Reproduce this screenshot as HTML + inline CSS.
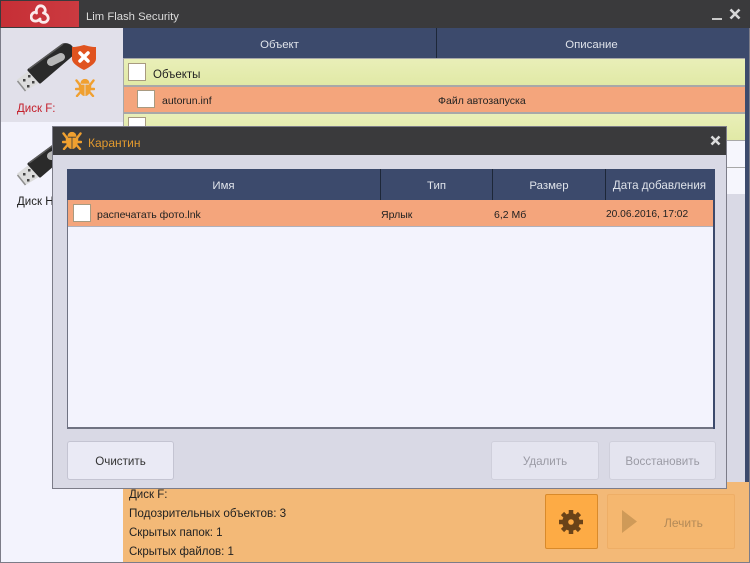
<!DOCTYPE html>
<html><head><meta charset="utf-8"><style>
html,body{margin:0;padding:0}
body{width:750px;height:563px;position:relative;overflow:hidden;background:#7c7c88;font-family:"Liberation Sans",sans-serif;font-size:10.5px;color:#222}
.a{position:absolute}
.t{position:absolute;white-space:nowrap;line-height:14px}
.cb{position:absolute;width:16px;height:16px;background:#fff;border:1px solid #a89a80}
.hd{color:#dfe3ea;font-size:11.4px;text-align:center}
.btn{position:absolute;box-sizing:border-box;border:1px solid #cfcfdb;border-radius:3px;background:#e4e4ef;text-align:center;color:#9a9aa4;font-size:11.6px}
.b{font-size:11.5px}
</style></head><body>
<svg width="0" height="0" style="position:absolute"><defs>
<symbol id="bug" viewBox="0 0 20 20"><g fill="none" stroke="#f0a030" stroke-width="2.400" stroke-linecap="round"><path d="M5 8L1.500 3.500M4.500 12H1M5.500 15L2 19M15 8l3.500-4.500M15.500 12H19M14.500 15l3.500 4"/></g><path fill="#f0a030" d="M5.500 6.800C5.500 .2 14.500 .2 14.500 6.800zM3.800 7.600h5.800V19C6 19 3.400 13.500 3.800 7.600zM10.400 7.600h5.800c.4 5.900-2.200 11.400-5.800 11.400z"/></symbol>
<symbol id="usb" viewBox="0 0 64 50"><path fill="#dcdcdc" stroke="#dcdcdc" stroke-linejoin="round" d="M2.500 38l10.500-8 10 11-12.500 7.500z"/><path fill="none" stroke="#8f8f8f" stroke-width="1.500" d="M2.500 39L10.500 49"/><rect x="8" y="37" width="2.500" height="2.500" fill="#444"/><rect x="13" y="33" width="2.500" height="2.500" fill="#444"/><rect x="12" y="43" width="2.500" height="2.500" fill="#444"/><rect x="17" y="39" width="2.500" height="2.500" fill="#444"/><path fill="#2a2a2a" stroke="#2a2a2a" stroke-width="3" stroke-linejoin="round" d="M14 28L48 3c3-1 5 0 7 1l5 6-35 30z"/><path fill="none" stroke="#5a5a5a" stroke-width="1.500" d="M14 27L48 2"/><path stroke="#b8b8b8" stroke-width="8" stroke-linecap="round" d="M36 20L46 15"/></symbol>
</defs></svg>

<!-- main window -->
<div class="a" style="left:0;top:0;width:750px;height:28px;background:#3a3a3c"></div>
<div class="a" style="left:1px;top:1px;width:78px;height:26px;background:linear-gradient(90deg,#c62f36,#cb3a40)"></div>
<svg class="a" style="left:30px;top:4px" width="20" height="20" viewBox="0 0 20 20"><g fill="none" stroke="#fbeaea" stroke-width="2.800" stroke-linecap="round"><path id="lg" d="M6.500 9C5.500 4.500 8 1.800 10.500 1.800 14 1.800 16.500 5.500 14.500 9"/><path d="M6.500 9C5.500 4.500 8 1.800 10.500 1.800 14 1.800 16.500 5.500 14.500 9" transform="rotate(120 10 11)"/><path d="M6.500 9C5.500 4.500 8 1.800 10.500 1.800 14 1.800 16.500 5.500 14.500 9" transform="rotate(240 10 11)"/></g></svg>
<div class="t" style="left:86px;top:10px;color:#dcdcdc;font-size:11.3px">Lim Flash Security</div>
<div class="a" style="left:712px;top:18px;width:10px;height:2px;background:#c8c8c8"></div>
<svg class="a" style="left:729px;top:8px" width="12" height="12"><path d="M1.500 1.500l9 9M10.500 1.500l-9 9" stroke="#d8d8d8" stroke-width="2.600"/></svg>

<!-- sidebar -->
<div class="a" style="left:1px;top:28px;width:122px;height:534px;background:#f3f3fd"></div>
<div class="a" style="left:1px;top:28px;width:122px;height:94px;background:#e1e0ea"></div>
<svg class="a" style="left:15px;top:42px" width="64" height="50"><use href="#usb" width="64" height="50"/></svg>
<svg class="a" style="left:72px;top:45px" width="24" height="25" viewBox="0 0 24 25"><path fill="#e0531f" d="M0 2c5 0 8-1 12-2 4 1 7 2 12 2v12c0 4-6 8-12 11C6 22 0 18 0 14z"/><path stroke="#fff" stroke-width="3.500" stroke-linecap="round" d="M8 8l8 8M16 8l-8 8"/></svg>
<svg class="a" style="left:75px;top:77px" width="20" height="20"><use href="#bug" width="20" height="20"/></svg>
<div class="t b" style="left:17px;top:102px;color:#c4202c">Диск F:</div>
<svg class="a" style="left:15px;top:136px" width="64" height="50"><use href="#usb" width="64" height="50"/></svg>
<div class="t b" style="left:17px;top:195px;color:#222">Диск H:</div>

<!-- main table -->
<div class="a" style="left:123px;top:28px;width:626px;height:460px;background:#3c4a6c"></div>
<div class="a" style="left:436px;top:28px;width:1px;height:30px;background:#1d2738"></div>
<div class="t hd" style="left:123px;top:38px;width:313px">Объект</div>
<div class="t hd" style="left:437px;top:38px;width:309px">Описание</div>
<div class="a" style="left:123px;top:58px;width:622px;height:136px;background:#a8a8a8"></div>
<div class="a" style="left:124px;top:59px;width:621px;height:26px;background:linear-gradient(#e9efb8,#e1e9a6)"></div>
<div class="a" style="left:124px;top:87px;width:621px;height:25px;background:#f4a57c"></div>
<div class="a" style="left:124px;top:114px;width:621px;height:26px;background:linear-gradient(#e9efb8,#e1e9a6)"></div>
<div class="a" style="left:124px;top:141px;width:621px;height:26px;background:#f6f6fd"></div>
<div class="a" style="left:124px;top:168px;width:621px;height:26px;background:#f6f6fd"></div>
<div class="a" style="left:123px;top:194px;width:622px;height:288px;background:#d9d9e5"></div>
<div class="cb" style="left:128px;top:63px"></div>
<div class="t b" style="left:153px;top:68px">Объекты</div>
<div class="cb" style="left:137px;top:90px"></div>
<div class="t" style="left:162px;top:94px">autorun.inf</div>
<div class="t" style="left:438px;top:94px">Файл автозапуска</div>
<div class="cb" style="left:128px;top:117px"></div>

<!-- bottom panel -->
<div class="a" style="left:123px;top:482px;width:626px;height:80px;background:#f3b977"></div>
<div class="t b" style="left:129px;top:488px">Диск F:</div>
<div class="t" style="left:129px;top:507px;font-size:11.7px">Подозрительных объектов: 3</div>
<div class="t b" style="left:129px;top:526px">Скрытых папок: 1</div>
<div class="t b" style="left:129px;top:545px">Скрытых файлов: 1</div>
<div class="a" style="left:545px;top:494px;width:53px;height:55px;box-sizing:border-box;background:#fdab45;border:1px solid #d98a2a;border-radius:2px"></div>
<svg class="a" style="left:559px;top:510px" width="24" height="24" viewBox="0 0 24 24"><circle cx="12" cy="12" r="5.800" fill="none" stroke="#6a4318" stroke-width="6"/><g stroke="#6a4318" stroke-width="4.500"><path d="M12 0v5M12 19v5M0 12h5M19 12h5M3.500 3.500l3.500 3.500M17 17l3.500 3.500M20.500 3.500L17 7M7 17l-3.500 3.500"/></g></svg>
<div class="a" style="left:607px;top:494px;width:128px;height:55px;box-sizing:border-box;background:#f5b76f;border:1px solid #eeae66;border-radius:2px"></div>
<svg class="a" style="left:622px;top:510px" width="16" height="24"><path d="M0 0L15 11.500L0 23z" fill="#cf9a58"/></svg>
<div class="t" style="left:664px;top:516px;color:#b38a58;font-size:12px">Лечить</div>

<!-- dialog -->
<div class="a" style="left:52px;top:126px;width:675px;height:363px;background:#7c7c88"></div>
<div class="a" style="left:53px;top:127px;width:673px;height:28px;background:#3a3a3c"></div>
<div class="a" style="left:53px;top:155px;width:673px;height:333px;background:#d9d9e5"></div>
<svg class="a" style="left:62px;top:130px" width="20" height="20"><use href="#bug" width="20" height="20"/></svg>
<div class="t" style="left:88px;top:136px;color:#e39a2e;font-size:12px">Карантин</div>
<svg class="a" style="left:710px;top:135px" width="11" height="11"><path d="M1.500 1.500l8 8M9.500 1.500l-8 8" stroke="#dcdcdc" stroke-width="2.600"/></svg>

<div class="a" style="left:67px;top:169px;width:648px;height:260px;background:#6f7282"></div>
<div class="a" style="left:68px;top:170px;width:645px;height:257px;background:#f3f3fd"></div>
<div class="a" style="left:67px;top:169px;width:646px;height:31px;background:#3c4a6c"></div>
<div class="a" style="left:713px;top:169px;width:2px;height:260px;background:#3c4a6c"></div>
<div class="a" style="left:380px;top:169px;width:1px;height:31px;background:#1d2738"></div>
<div class="a" style="left:492px;top:169px;width:1px;height:31px;background:#1d2738"></div>
<div class="a" style="left:605px;top:169px;width:1px;height:31px;background:#1d2738"></div>
<div class="t hd" style="left:67px;top:179px;width:313px">Имя</div>
<div class="t hd" style="left:381px;top:179px;width:111px">Тип</div>
<div class="t hd" style="left:493px;top:179px;width:112px">Размер</div>
<div class="t hd" style="left:606px;top:179px;width:107px;font-size:11.6px">Дата добавления</div>
<div class="a" style="left:68px;top:200px;width:645px;height:26px;background:#f4a57c"></div>
<div class="a" style="left:68px;top:226px;width:645px;height:1px;background:#b0b0bb"></div>
<div class="cb" style="left:73px;top:204px"></div>
<div class="t" style="left:97px;top:208px">распечатать фото.lnk</div>
<div class="t" style="left:381px;top:208px">Ярлык</div>
<div class="t" style="left:494px;top:208px">6,2 Мб</div>
<div class="t" style="left:606px;top:208px;font-size:10.2px">20.06.2016, 17:02</div>

<div class="btn" style="left:67px;top:441px;width:107px;height:39px;line-height:40px;color:#333;background:#eaeaf5;border:1px solid #c4c4d2">Очистить</div>
<div class="btn" style="left:491px;top:441px;width:108px;height:39px;line-height:40px">Удалить</div>
<div class="btn" style="left:609px;top:441px;width:107px;height:39px;line-height:40px">Восстановить</div>
</body></html>
